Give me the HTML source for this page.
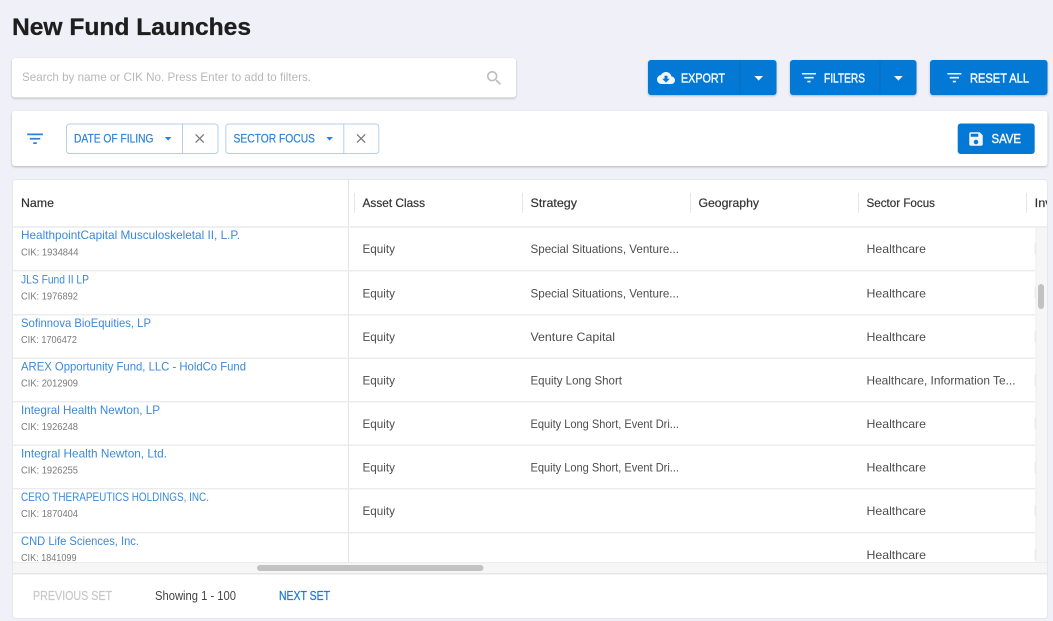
<!DOCTYPE html>
<html lang="en"><head><meta charset="utf-8"><title>New Fund Launches</title>
<style>
html,body{margin:0;padding:0;background:#f0f0f8;width:1053px;height:621px;overflow:hidden}
svg{display:block;font-family:"Liberation Sans",sans-serif;filter:blur(.25px)}
.t{fill:#4d4d4d;font-size:12px}
.h{fill:#333;font-size:12px;stroke:#333;stroke-width:.2px}
.l{fill:#3b88dc;font-size:12px}
.c{fill:#7a7a7a;font-size:10px}
.b{fill:#f1f6fc;font-size:12.5px;stroke:#f1f6fc;stroke-width:.45px}
.ch{fill:#2b82dc;font-size:11.5px;stroke:#2b82dc;stroke-width:.2px}
.line{fill:#ececee}
.sh{filter:drop-shadow(0 1px 1px rgba(0,0,0,.25))}
</style></head><body>
<svg width="1053" height="621" viewBox="0 0 1053 621" xmlns="http://www.w3.org/2000/svg">
<defs>
<clipPath id="body"><rect x="13" y="228" width="1034" height="334"/></clipPath>
<clipPath id="head"><rect x="13" y="180" width="1034" height="46"/></clipPath>
<path id="f" d="M10 18h4v-2h-4v2zM3 6v2h18V6H3zm3 7h12v-2H6v2z"/>
<path id="x" d="M19 6.41L17.59 5 12 10.59 6.41 5 5 6.41 10.59 12 5 17.59 6.41 19 12 13.41 17.59 19 19 17.59 13.41 12z"/>
</defs>
<rect width="1053" height="621" fill="#f0f0f8"/>
<text x="12" y="35" font-size="24" font-weight="bold" fill="#1e1e1e" stroke="#1e1e1e" stroke-width=".3" textLength="239" lengthAdjust="spacingAndGlyphs">New Fund Launches</text>

<!-- search -->
<rect class="sh" x="12" y="58" width="504" height="39.5" rx="3" fill="#fff"/>
<text x="22" y="81" font-size="12" fill="#b8b8b8" textLength="289" lengthAdjust="spacingAndGlyphs">Search by name or CIK No. Press Enter to add to filters.</text>
<path transform="translate(484.6 68.6) scale(.8)" fill="#bdbdbd" d="M15.5 14h-.79l-.28-.27C15.41 12.59 16 11.11 16 9.5 16 5.91 13.09 3 9.5 3S3 5.91 3 9.5 5.91 16 9.5 16c1.61 0 3.09-.59 4.23-1.57l.27.28v.79l5 4.99L20.49 19l-4.99-5zm-6 0C7.01 14 5 11.99 5 9.5S7.01 5 9.5 5 14 7.01 14 9.5 11.99 14 9.5 14z"/>

<!-- buttons -->
<rect class="sh" x="648" y="60" width="128.5" height="35" rx="3" fill="#0379d5"/>
<rect x="739.5" y="60" width="1" height="35" fill="#0a6cbd"/>
<path transform="translate(657 69) scale(.75)" fill="#f1f6fc" d="M19.35 10.04C18.67 6.59 15.64 4 12 4 9.11 4 6.6 5.64 5.35 8.04 2.34 8.36 0 10.91 0 14c0 3.31 2.69 6 6 6h13c2.76 0 5-2.24 5-5 0-2.64-2.05-4.78-4.65-4.96zM17 13l-5 5-5-5h3V9h4v4h3z"/>
<text class="b" x="681" y="82.5" textLength="44" lengthAdjust="spacingAndGlyphs">EXPORT</text>
<path d="M754.3 76h8.8l-4.4 4.6z" fill="#f1f6fc"/>

<rect class="sh" x="790" y="60" width="126.5" height="35" rx="3" fill="#0379d5"/>
<rect x="879.5" y="60" width="1" height="35" fill="#0a6cbd"/>
<use href="#f" transform="translate(799.6 68.3) scale(.78)" fill="#f1f6fc"/>
<text class="b" x="824" y="82.5" textLength="41" lengthAdjust="spacingAndGlyphs">FILTERS</text>
<path d="M894 76h8.8l-4.4 4.6z" fill="#f1f6fc"/>

<rect class="sh" x="930" y="60" width="117.5" height="35" rx="3" fill="#0379d5"/>
<use href="#f" transform="translate(945 68.3) scale(.78)" fill="#f1f6fc"/>
<text class="b" x="970" y="82.5" textLength="59" lengthAdjust="spacingAndGlyphs">RESET ALL</text>

<!-- filter bar -->
<rect class="sh" x="12" y="111" width="1035.5" height="55" rx="3" fill="#fff"/>
<use href="#f" transform="translate(24.6 128.3) scale(.87)" fill="#2b82dc"/>
<rect x="66.5" y="124" width="151.5" height="29.5" rx="3" fill="#fff" stroke="#b3cfec"/>
<rect x="182" y="124" width="1" height="29.5" fill="#b3cfec"/>
<text class="ch" x="74" y="142.5" textLength="79.5" lengthAdjust="spacingAndGlyphs">DATE OF FILING</text>
<path d="M164.8 137h6.6l-3.3 3.6z" fill="#2b82dc"/>
<use href="#x" transform="translate(191.9 130.7) scale(.65)" fill="#7a7a7a"/>
<rect x="225.8" y="124" width="153" height="29.5" rx="3" fill="#fff" stroke="#b3cfec"/>
<rect x="343.3" y="124" width="1" height="29.5" fill="#b3cfec"/>
<text class="ch" x="233.5" y="142.5" textLength="81.5" lengthAdjust="spacingAndGlyphs">SECTOR FOCUS</text>
<path d="M326.3 137h6.6l-3.3 3.6z" fill="#2b82dc"/>
<use href="#x" transform="translate(353.3 130.7) scale(.65)" fill="#7a7a7a"/>

<rect x="957.7" y="123.5" width="77" height="30.5" rx="3" fill="#0379d5"/>
<path transform="translate(967 130) scale(.75)" fill="#f1f6fc" d="M17 3H5c-1.11 0-2 .9-2 2v14c0 1.1.89 2 2 2h14c1.1 0 2-.9 2-2V7l-4-4zm-5 16c-1.66 0-3-1.34-3-3s1.34-3 3-3 3 1.34 3 3-1.34 3-3 3zm3-10H5V5h10v4z"/>
<text class="b" x="991.5" y="143" textLength="29.5" lengthAdjust="spacingAndGlyphs">SAVE</text>

<!-- table card -->
<rect x="12.5" y="179.5" width="1035" height="439" rx="3" fill="#fff" stroke="#e6e6ec"/>
<rect x="348" y="180" width="1" height="382" fill="#e4e4e8"/>
<g clip-path="url(#head)">
<rect x="354" y="193" width="1" height="20" fill="#e6e6e6"/><rect x="522" y="193" width="1" height="20" fill="#e6e6e6"/><rect x="690" y="193" width="1" height="20" fill="#e6e6e6"/><rect x="858" y="193" width="1" height="20" fill="#e6e6e6"/><rect x="1026" y="193" width="1" height="20" fill="#e6e6e6"/>
<text class="h" x="21" y="207" textLength="33" lengthAdjust="spacingAndGlyphs">Name</text>
<text class="h" x="362.5" y="207" textLength="62.5" lengthAdjust="spacingAndGlyphs">Asset Class</text>
<text class="h" x="530.5" y="207" textLength="46.5" lengthAdjust="spacingAndGlyphs">Strategy</text>
<text class="h" x="698.5" y="207" textLength="60.5" lengthAdjust="spacingAndGlyphs">Geography</text>
<text class="h" x="866.5" y="207" textLength="68.5" lengthAdjust="spacingAndGlyphs">Sector Focus</text>
<text class="h" x="1034.7" y="207" textLength="17" lengthAdjust="spacingAndGlyphs">Inv</text>
</g>
<rect x="13" y="226" width="1034" height="2" fill="#efeff1"/>
<rect class="line" x="13" y="270" width="1022" height="1.5"/>
<rect class="line" x="13" y="314" width="1022" height="1.5"/>
<rect class="line" x="13" y="357.5" width="1022" height="1.5"/>
<rect class="line" x="13" y="401" width="1022" height="1.5"/>
<rect class="line" x="13" y="444.5" width="1022" height="1.5"/>
<rect class="line" x="13" y="488" width="1022" height="1.5"/>
<rect class="line" x="13" y="532" width="1022" height="1.5"/>

<g clip-path="url(#body)">
<text class="l" x="21" y="239" textLength="219" lengthAdjust="spacingAndGlyphs">HealthpointCapital Musculoskeletal II, L.P.</text>
<text class="c" x="21" y="255.5" textLength="57.5" lengthAdjust="spacingAndGlyphs">CIK: 1934844</text>
<text class="l" x="21" y="283.5" textLength="68" lengthAdjust="spacingAndGlyphs">JLS Fund II LP</text>
<text class="c" x="21" y="299.5" textLength="57" lengthAdjust="spacingAndGlyphs">CIK: 1976892</text>
<text class="l" x="21" y="327" textLength="130" lengthAdjust="spacingAndGlyphs">Sofinnova BioEquities, LP</text>
<text class="c" x="21" y="343" textLength="56" lengthAdjust="spacingAndGlyphs">CIK: 1706472</text>
<text class="l" x="21" y="370.5" textLength="225" lengthAdjust="spacingAndGlyphs">AREX Opportunity Fund, LLC - HoldCo Fund</text>
<text class="c" x="21" y="386.5" textLength="57" lengthAdjust="spacingAndGlyphs">CIK: 2012909</text>
<text class="l" x="21" y="414" textLength="139" lengthAdjust="spacingAndGlyphs">Integral Health Newton, LP</text>
<text class="c" x="21" y="430" textLength="57" lengthAdjust="spacingAndGlyphs">CIK: 1926248</text>
<text class="l" x="21" y="457.5" textLength="146" lengthAdjust="spacingAndGlyphs">Integral Health Newton, Ltd.</text>
<text class="c" x="21" y="473.5" textLength="57" lengthAdjust="spacingAndGlyphs">CIK: 1926255</text>
<text class="l" x="21" y="501" textLength="188" lengthAdjust="spacingAndGlyphs">CERO THERAPEUTICS HOLDINGS, INC.</text>
<text class="c" x="21" y="517" textLength="57" lengthAdjust="spacingAndGlyphs">CIK: 1870404</text>
<text class="l" x="21" y="545" textLength="118" lengthAdjust="spacingAndGlyphs">CND Life Sciences, Inc.</text>
<text class="c" x="21" y="561" textLength="55.5" lengthAdjust="spacingAndGlyphs">CIK: 1841099</text>

<text class="t" x="362.5" y="253" textLength="32.5" lengthAdjust="spacingAndGlyphs">Equity</text>
<text class="t" x="362.5" y="297.5" textLength="32.5" lengthAdjust="spacingAndGlyphs">Equity</text>
<text class="t" x="362.5" y="341" textLength="32.5" lengthAdjust="spacingAndGlyphs">Equity</text>
<text class="t" x="362.5" y="384.5" textLength="32.5" lengthAdjust="spacingAndGlyphs">Equity</text>
<text class="t" x="362.5" y="428" textLength="32.5" lengthAdjust="spacingAndGlyphs">Equity</text>
<text class="t" x="362.5" y="471.5" textLength="32.5" lengthAdjust="spacingAndGlyphs">Equity</text>
<text class="t" x="362.5" y="515" textLength="32.5" lengthAdjust="spacingAndGlyphs">Equity</text>

<text class="t" x="530.5" y="253" textLength="148.5" lengthAdjust="spacingAndGlyphs">Special Situations, Venture...</text>
<text class="t" x="530.5" y="297.5" textLength="148.5" lengthAdjust="spacingAndGlyphs">Special Situations, Venture...</text>
<text class="t" x="530.5" y="341" textLength="84.5" lengthAdjust="spacingAndGlyphs">Venture Capital</text>
<text class="t" x="530.5" y="384.5" textLength="91.5" lengthAdjust="spacingAndGlyphs">Equity Long Short</text>
<text class="t" x="530.5" y="428" textLength="148.5" lengthAdjust="spacingAndGlyphs">Equity Long Short, Event Dri...</text>
<text class="t" x="530.5" y="471.5" textLength="148.5" lengthAdjust="spacingAndGlyphs">Equity Long Short, Event Dri...</text>

<text class="t" x="866.5" y="253" textLength="59.5" lengthAdjust="spacingAndGlyphs">Healthcare</text>
<text class="t" x="866.5" y="297.5" textLength="59.5" lengthAdjust="spacingAndGlyphs">Healthcare</text>
<text class="t" x="866.5" y="341" textLength="59.5" lengthAdjust="spacingAndGlyphs">Healthcare</text>
<text class="t" x="866.5" y="384.5" textLength="149" lengthAdjust="spacingAndGlyphs">Healthcare, Information Te...</text>
<text class="t" x="866.5" y="428" textLength="59.5" lengthAdjust="spacingAndGlyphs">Healthcare</text>
<text class="t" x="866.5" y="471.5" textLength="59.5" lengthAdjust="spacingAndGlyphs">Healthcare</text>
<text class="t" x="866.5" y="515" textLength="59.5" lengthAdjust="spacingAndGlyphs">Healthcare</text>
<text class="t" x="866.5" y="559" textLength="59.5" lengthAdjust="spacingAndGlyphs">Healthcare</text>

<g fill="#ededed">
<rect x="1034.5" y="243" width="1" height="11"/><rect x="1034.5" y="287" width="1" height="11"/><rect x="1034.5" y="331" width="1" height="11"/><rect x="1034.5" y="375" width="1" height="11"/><rect x="1034.5" y="418" width="1" height="11"/><rect x="1034.5" y="462" width="1" height="11"/><rect x="1034.5" y="505" width="1" height="11"/><rect x="1034.5" y="549" width="1" height="11"/>
</g>
</g>

<!-- vertical scrollbar -->
<rect x="1035.5" y="228" width="11.5" height="334" fill="#f6f6f6"/>
<rect x="1035.5" y="228" width="1" height="334" fill="#ececec"/>
<rect x="1038" y="284" width="6" height="25" rx="3" fill="#c2c2c2"/>

<!-- horizontal scrollbar -->
<rect x="13" y="562" width="1034" height="11" fill="#f6f6f6"/>
<rect x="13" y="562" width="1034" height="1" fill="#ececec"/>
<rect x="13" y="573" width="1034" height="1.5" fill="#e6e6e8"/>
<rect x="257" y="565" width="226.5" height="6" rx="3" fill="#c2c2c2"/>

<!-- footer -->
<text x="33" y="600" font-size="12.5" fill="#c8c8c8" stroke="#c8c8c8" stroke-width=".2" textLength="79" lengthAdjust="spacingAndGlyphs">PREVIOUS SET</text>
<text x="155" y="600" font-size="12.5" fill="#444" textLength="81" lengthAdjust="spacingAndGlyphs">Showing 1 - 100</text>
<text x="279" y="600" font-size="12.5" fill="#1f7ad6" stroke="#1f7ad6" stroke-width=".25" textLength="51" lengthAdjust="spacingAndGlyphs">NEXT SET</text>
</svg>
</body></html>
